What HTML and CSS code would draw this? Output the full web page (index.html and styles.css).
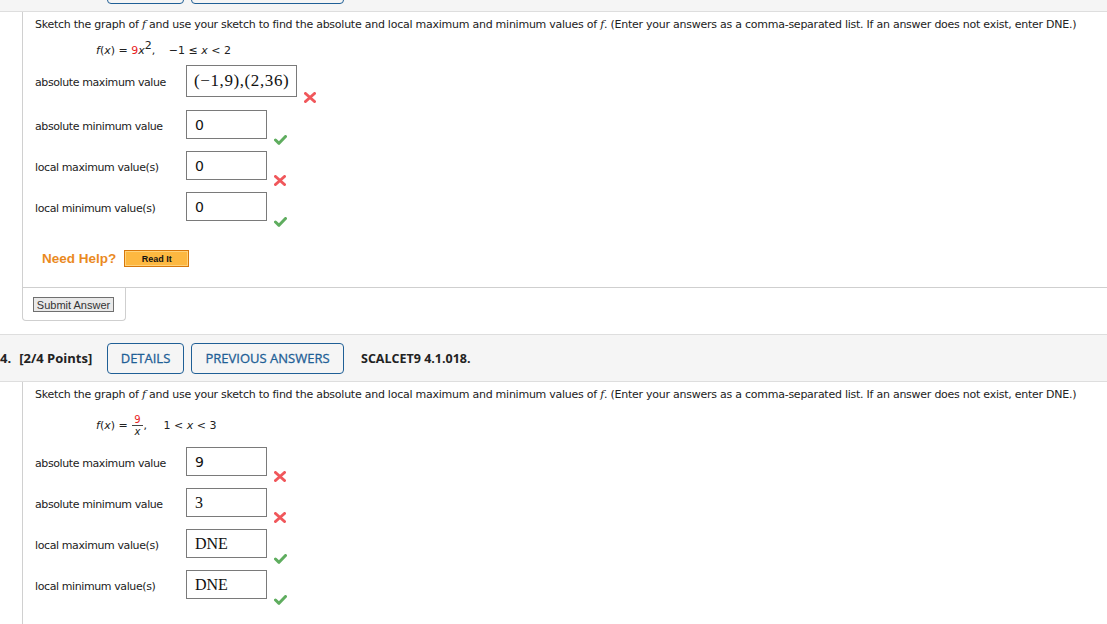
FILE: index.html
```html
<!DOCTYPE html>
<html>
<head>
<meta charset="utf-8">
<link rel="stylesheet" href="styles.css">
</head>
<body>
<div class="qhead qhead-prev">
  <span class="pts"></span>
  <span class="hbtn hbtn-details"></span>
  <span class="hbtn hbtn-prev"></span>
</div>

<div class="qbody">
  <p class="prompt">Sketch the graph of <i>f</i> and use your sketch to find the absolute and local maximum and minimum values of <i>f</i>. (Enter your answers as a comma-separated list. If an answer does not exist, enter DNE.)</p>
  <div class="formula"><span class="fx"><i>f</i>(<i>x</i>)</span> = <span class="red">9</span><i>x</i><sup>2</sup>, <span class="dom">&minus;1 &le; <i>x</i> &lt; 2</span></div>

  <div class="row row-tall">
    <span class="label">absolute maximum value</span>
    <span class="box box-wide serif big">(&minus;1,9),(2,36)</span>
    <span class="mark"><svg width="12" height="11" viewBox="0 0 12 11"><path d="M1.5 1.5 L10.5 9.5 M10.5 1.5 L1.5 9.5" stroke="#f0575b" stroke-width="3" stroke-linecap="round" fill="none"/></svg></span>
  </div>
  <div class="row">
    <span class="label">absolute minimum value</span>
    <span class="box sans">0</span>
    <span class="mark"><svg width="13" height="10" viewBox="0 0 13 10"><path d="M1.5 5 L5 8.3 L11.5 1.5" stroke="#5fad5f" stroke-width="3" stroke-linecap="round" stroke-linejoin="round" fill="none"/></svg></span>
  </div>
  <div class="row">
    <span class="label">local maximum value(s)</span>
    <span class="box sans">0</span>
    <span class="mark"><svg width="12" height="11" viewBox="0 0 12 11"><path d="M1.5 1.5 L10.5 9.5 M10.5 1.5 L1.5 9.5" stroke="#f0575b" stroke-width="3" stroke-linecap="round" fill="none"/></svg></span>
  </div>
  <div class="row">
    <span class="label">local minimum value(s)</span>
    <span class="box sans">0</span>
    <span class="mark"><svg width="13" height="10" viewBox="0 0 13 10"><path d="M1.5 5 L5 8.3 L11.5 1.5" stroke="#5fad5f" stroke-width="3" stroke-linecap="round" stroke-linejoin="round" fill="none"/></svg></span>
  </div>

  <div class="help">
    <span class="need">Need Help?</span>
    <span class="readit">Read It</span>
  </div>
</div>

<div class="submit-wrap">
  <div class="submit-box"><span class="submit">Submit Answer</span></div>
</div>

<div class="qhead">
  <span class="pts"><span class="num">4.</span>[2/4 Points]</span>
  <span class="hbtn hbtn-details">DETAILS</span>
  <span class="hbtn hbtn-prev">PREVIOUS ANSWERS</span>
  <span class="code">SCALCET9 4.1.018.</span>
</div>

<div class="qbody qbody2">
  <p class="prompt">Sketch the graph of <i>f</i> and use your sketch to find the absolute and local maximum and minimum values of <i>f</i>. (Enter your answers as a comma-separated list. If an answer does not exist, enter DNE.)</p>
  <div class="formula formula2"><span class="fx"><i>f</i>(<i>x</i>)</span> = <span class="frac"><span class="red numer">9</span><span class="denom"><i>x</i></span></span>, <span class="dom2">1 &lt; <i>x</i> &lt; 3</span></div>

  <div class="row">
    <span class="label">absolute maximum value</span>
    <span class="box sans">9</span>
    <span class="mark"><svg width="12" height="11" viewBox="0 0 12 11"><path d="M1.5 1.5 L10.5 9.5 M10.5 1.5 L1.5 9.5" stroke="#f0575b" stroke-width="3" stroke-linecap="round" fill="none"/></svg></span>
  </div>
  <div class="row">
    <span class="label">absolute minimum value</span>
    <span class="box serif">3</span>
    <span class="mark"><svg width="12" height="11" viewBox="0 0 12 11"><path d="M1.5 1.5 L10.5 9.5 M10.5 1.5 L1.5 9.5" stroke="#f0575b" stroke-width="3" stroke-linecap="round" fill="none"/></svg></span>
  </div>
  <div class="row">
    <span class="label">local maximum value(s)</span>
    <span class="box serif">DNE</span>
    <span class="mark"><svg width="13" height="10" viewBox="0 0 13 10"><path d="M1.5 5 L5 8.3 L11.5 1.5" stroke="#5fad5f" stroke-width="3" stroke-linecap="round" stroke-linejoin="round" fill="none"/></svg></span>
  </div>
  <div class="row">
    <span class="label">local minimum value(s)</span>
    <span class="box serif">DNE</span>
    <span class="mark"><svg width="13" height="10" viewBox="0 0 13 10"><path d="M1.5 5 L5 8.3 L11.5 1.5" stroke="#5fad5f" stroke-width="3" stroke-linecap="round" stroke-linejoin="round" fill="none"/></svg></span>
  </div>
</div>
</body>
</html>
```

FILE: styles.css
```css
html, body {
  margin: 0;
  padding: 0;
  background: #fff;
  overflow: hidden;
}
body {
  width: 1107px;
  height: 624px;
  font-family: "DejaVu Sans", Verdana, sans-serif;
  font-size: 11px;
  color: #222;
}

/* question header bar */
.qhead {
  display: flex;
  align-items: center;
  height: 46px;
  background: #f5f5f5;
  border-top: 1px solid #dedede;
  border-bottom: 1px solid #dedede;
  font-family: "Open Sans", sans-serif;
  font-size: 13px;
  color: #222;
}
.qhead-prev {
  margin-top: -36px;
}
.pts {
  font-weight: 700;
  margin-left: 0;
  width: 107px;
  flex: none;
}
.num {
  margin-right: 8px;
}
.hbtn {
  box-sizing: border-box;
  height: 31px;
  display: inline-flex;
  align-items: center;
  justify-content: center;
  border: 1px solid #1f5f96;
  border-radius: 4px;
  color: #1f5f96;
  font-weight: 400;
  -webkit-text-stroke: 0.3px #1f5f96;
  flex: none;
}
.hbtn-details {
  width: 77px;
  margin-right: 7px;
}
.hbtn-prev {
  width: 153px;
  margin-right: 17px;
}
.code {
  font-weight: 700;
  font-size: 12.5px;
}

/* question body */
.qbody {
  margin-left: 22px;
  border-left: 1px solid #d0d0d0;
  padding: 6px 0 20px 12px;
}
.qbody2 {
  padding-top: 6px;
  padding-bottom: 40px;
}
.prompt {
  margin: 0;
  line-height: 14px;
  white-space: nowrap;
  letter-spacing: -0.25px;
}
.prompt i {
  font-family: "DejaVu Serif", serif;
}
.formula {
  margin: 11px 0 0 61px;
  height: 16px;
  line-height: 16px;
  white-space: nowrap;
}
.formula sup {
  font-size: 11px;
  line-height: 0;
  vertical-align: 5px;
}
.red {
  color: #e8211e;
}
.dom {
  margin-left: 10px;
}
.dom2 {
  margin-left: 13px;
}
.formula2 {
  margin-top: 12px;
}
.frac {
  display: inline-flex;
  flex-direction: column;
  align-items: center;
  vertical-align: middle;
  font-size: 10px;
  line-height: 11px;
  margin: 0 1px;
}
.numer {
  padding: 0 2px;
  border-bottom: 1px solid #444;
}

/* answer rows */
.row {
  display: flex;
  align-items: center;
  height: 29px;
  margin-top: 12px;
}
.formula + .row {
  margin-top: 6px;
}
.formula2 + .row {
  margin-top: 17px;
}
.row-tall {
  height: 32px;
}
.row-tall + .row {
  margin-top: 13px;
}
.label {
  width: 151px;
  flex: none;
  padding-top: 3px;
  letter-spacing: -0.4px;
}
.box {
  box-sizing: border-box;
  width: 81px;
  height: 29px;
  border: 1px solid #7a7a7a;
  display: flex;
  align-items: center;
  padding-left: 8px;
  color: #111;
  flex: none;
}
.box-wide {
  width: 111px;
  height: 32px;
  padding-left: 7px;
}
.sans {
  font-family: "DejaVu Sans", sans-serif;
  font-size: 14px;
}
.serif {
  font-family: "Liberation Serif", serif;
  font-size: 16px;
}
.big {
  font-size: 17px;
  letter-spacing: 0.6px;
}
.mark {
  align-self: flex-end;
  margin-left: 7px;
  margin-bottom: -6px;
  display: flex;
}

/* help */
.help {
  display: flex;
  align-items: center;
  margin: 29px 0 0 7px;
}
.need {
  font-family: "Liberation Sans", Arial, sans-serif;
  font-weight: 700;
  font-size: 13.5px;
  color: #ea8a1f;
  margin-right: 8px;
}
.readit {
  box-sizing: border-box;
  width: 65px;
  height: 17px;
  display: inline-flex;
  align-items: center;
  justify-content: center;
  background: #fdb841;
  border: 1px solid #d7770a;
  box-shadow: inset 0 0 0 1px #ffd27a;
  font-family: "Liberation Sans", Arial, sans-serif;
  font-weight: 700;
  font-size: 9px;
  color: #111;
}

/* submit */
.submit-wrap {
  margin-left: 22px;
  border-top: 1px solid #cfcfcf;
  margin-bottom: 13px;
}
.submit-box {
  box-sizing: border-box;
  width: 104px;
  height: 33px;
  border: 1px solid #cfcfcf;
  border-top: none;
  border-radius: 0 0 4px 4px;
  padding: 9px 0 0 10px;
}
.submit {
  box-sizing: border-box;
  display: inline-flex;
  align-items: center;
  justify-content: center;
  width: 81px;
  height: 15px;
  background: #e9e9e9;
  border: 1px solid #6f6f6f;
  font-family: "Liberation Sans", Arial, sans-serif;
  font-size: 11px;
  color: #333;
}
```
